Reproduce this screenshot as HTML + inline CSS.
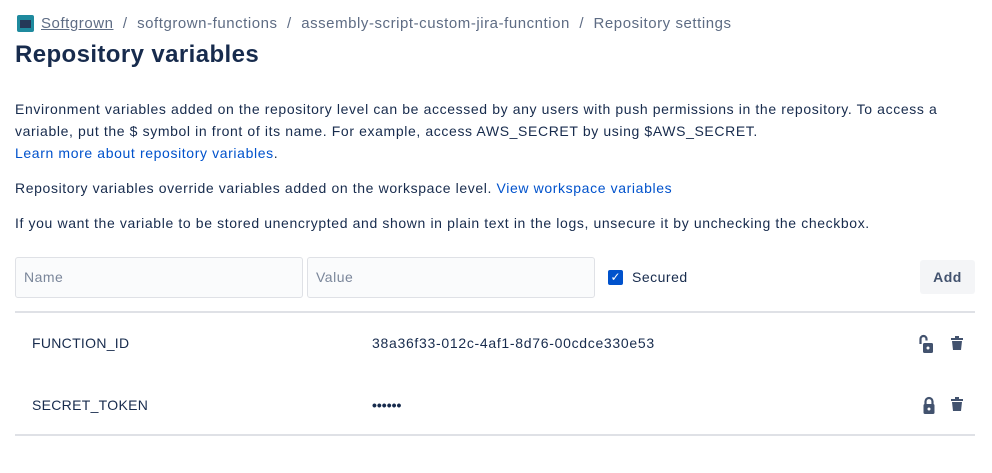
<!DOCTYPE html><html><head><style>
body{margin:0;background:#fff;font-family:"Liberation Sans",sans-serif;color:#172b4d;width:992px;height:473px;overflow:hidden;position:relative}
.a{position:absolute;white-space:nowrap}
.p{font-size:14px;line-height:22px;left:15px;letter-spacing:0.62px}
a{color:#0052cc;text-decoration:none}
.in{position:absolute;top:257px;border:1px solid #dfe1e6;border-radius:3px;background:#fafbfc;font-size:14px;color:#7a869a;line-height:39px;padding-left:8px;box-sizing:border-box;height:41px;letter-spacing:0.5px}
.ln{position:absolute;left:15px;width:960px;height:2px;background:#dfe1e6}
.r{font-size:14px;letter-spacing:0.5px}
</style></head><body>
<div class="a" style="left:17px;top:15px;width:17px;height:17px;background:#1f8a9e;border-radius:2px"><div style="margin:5px 3px;width:11px;height:8px;background:#253858"></div></div>
<div class="a" style="left:41px;top:15px;font-size:15px;color:#5e6c84;letter-spacing:0.55px"><span style="text-decoration:underline">Softgrown</span> &nbsp;/&nbsp; softgrown-functions &nbsp;/&nbsp; assembly-script-custom-jira-funcntion &nbsp;/&nbsp; Repository settings</div>
<div class="a" style="left:15px;top:41px;font-size:24px;font-weight:bold;letter-spacing:0.4px">Repository variables</div>
<div class="a p" style="top:98px">Environment variables added on the repository level can be accessed by any users with push permissions in the repository. To access a<br>variable, put the $ symbol in front of its name. For example, access AWS_SECRET by using $AWS_SECRET.<br><a>Learn more about repository variables</a>.</div>
<div class="a p" style="top:177px">Repository variables override variables added on the workspace level. <a>View workspace variables</a></div>
<div class="a p" style="top:212px">If you want the variable to be stored unencrypted and shown in plain text in the logs, unsecure it by unchecking the checkbox.</div>
<div class="in" style="left:15px;width:288px">Name</div>
<div class="in" style="left:307px;width:288px">Value</div>
<div class="a" style="left:608px;top:270px;width:15px;height:15px;background:#0052cc;border-radius:2px;color:#fff;font-size:12px;line-height:15px;text-align:center">✓</div>
<div class="a r" style="left:632px;top:269px">Secured</div>
<div class="a" style="left:920px;top:260px;width:55px;height:34px;background:#f4f5f7;border-radius:3px;font-size:14px;font-weight:bold;line-height:34px;text-align:center;color:#42526e;letter-spacing:0.5px">Add</div>
<div class="ln" style="top:311px"></div>
<div class="a r" style="left:32px;top:335px;letter-spacing:0.3px">FUNCTION_ID</div>
<div class="a r" style="left:372px;top:335px;letter-spacing:0.7px">38a36f33-012c-4af1-8d76-00cdce330e53</div>
<div class="a r" style="left:32px;top:397px;letter-spacing:0.3px">SECRET_TOKEN</div>
<div class="a" style="left:372px;top:397px;font-size:14px;font-weight:bold">••••••</div>
<svg class="a" style="left:918px;top:334px" width="20" height="20" viewBox="0 0 20 20"><path d="M2.5 10V5a3 3 0 0 1 6 0v1.5" stroke="#42526e" stroke-width="2.2" fill="none"/><rect x="5" y="9" width="10" height="10" rx="1.5" fill="#42526e"/><circle cx="10" cy="14" r="1.5" fill="#fff"/></svg>
<svg class="a" style="left:920px;top:395px" width="20" height="20" viewBox="0 0 20 20"><path d="M5.5 10V6.5a3.5 3.5 0 0 1 7 0V10" stroke="#42526e" stroke-width="2.2" fill="none"/><rect x="3.5" y="9" width="11" height="10" rx="1.5" fill="#42526e"/><circle cx="9" cy="14" r="1.5" fill="#fff"/></svg>
<svg class="a" style="left:949px;top:335px" width="16" height="16" viewBox="0 0 16 16"><rect x="2" y="3" width="12" height="2" fill="#42526e"/><rect x="6" y="1" width="4" height="2" fill="#42526e"/><path d="M3 6h10l-1 9H4z" fill="#42526e"/></svg>
<svg class="a" style="left:949px;top:396px" width="16" height="16" viewBox="0 0 16 16"><rect x="2" y="3" width="12" height="2" fill="#42526e"/><rect x="6" y="1" width="4" height="2" fill="#42526e"/><path d="M3 6h10l-1 9H4z" fill="#42526e"/></svg>
<div class="ln" style="top:434px"></div>
</body></html>
